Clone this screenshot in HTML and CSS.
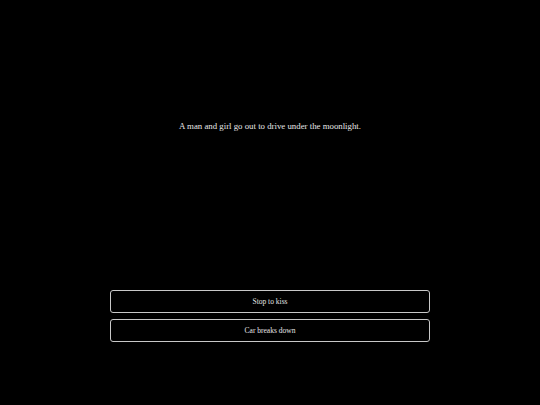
FILE: index.html
```html
<!doctype html>
<html lang="en">
<head>
    <meta charset="UTF-8">
    <title>Moonlight</title>
    <link rel="stylesheet" href="styles.css">
</head>
<body>
    <div class="stage">
        <div class="story">
            <p class="passage">A man and girl go out to drive under the moonlight.</p>
        </div>
        <ul class="choices">
            <li><a href="javascript:void(0)">Stop to kiss</a></li>
            <li><a href="javascript:void(0)">Car breaks down</a></li>
        </ul>
    </div>
</body>
</html>
```

FILE: styles.css
```css
*{
    padding: 0;
    margin: 0;
}
html,body{
    height: 100%;
    background-color: #000;
}
body{
    font-family: "Liberation Serif", "DejaVu Serif", serif;
    color: #e6e6e6;
}
ul,li{
    list-style: none;
}
a{
    text-decoration: none;
    color: #e6e6e6;
}
.stage{
    height: 100%;
    display: flex;
    flex-direction: column;
}
.story{
    flex: 1;
    padding-top: 120px;
    text-align: center;
}
.passage{
    font-size: 8.8px;
    line-height: 12px;
}
.choices{
    width: 320px;
    margin: 0 auto;
    padding-bottom: 63px;
    display: flex;
    flex-direction: column;
    gap: 6px;
}
.choices li a{
    display: block;
    height: 21px;
    line-height: 21px;
    border: 1px solid #c8c8c8;
    border-radius: 3px;
    text-align: center;
    font-size: 7.5px;
}
```
